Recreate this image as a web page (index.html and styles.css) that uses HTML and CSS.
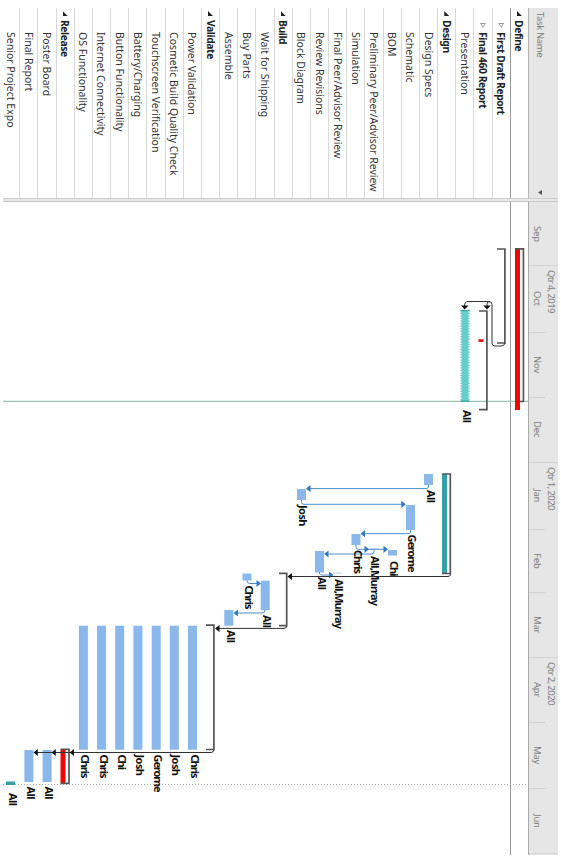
FILE: index.html
```html
<!DOCTYPE html>
<html>
<head>
    <meta charset="utf-8">
    <title>Project Schedule</title>
    <link rel="stylesheet" href="styles.css">
</head>

<body>
<div class="sheet">
    <div class="tasks">
        <div class="tasks-head"><span>Task Name</span><i class="drop"></i></div>
        <div class="row phase first"><i class="open"></i>Define</div>
        <div class="row sub"><i class="closed"></i>First Draft Report</div>
        <div class="row sub"><i class="closed"></i>Final 460 Report</div>
        <div class="row">Presentation</div>
        <div class="row phase"><i class="open"></i>Design</div>
        <div class="row">Design Specs</div>
        <div class="row">Schematic</div>
        <div class="row">BOM</div>
        <div class="row">Preliminary Peer/Advisor Review</div>
        <div class="row">Simulation</div>
        <div class="row">Final Peer/Advisor Review</div>
        <div class="row">Review Revisions</div>
        <div class="row">Block Diagram</div>
        <div class="row phase"><i class="open"></i>Build</div>
        <div class="row">Wait for Shipping</div>
        <div class="row">Buy Parts</div>
        <div class="row">Assemble</div>
        <div class="row phase"><i class="open"></i>Validate</div>
        <div class="row">Power Validation</div>
        <div class="row">Cosmetic Build Quality Check</div>
        <div class="row">Touchscreen Verification</div>
        <div class="row">Battery/Charging</div>
        <div class="row">Button Functionality</div>
        <div class="row">Internet Connectivity</div>
        <div class="row">OS Functionality</div>
        <div class="row phase"><i class="open"></i>Release</div>
        <div class="row">Poster Board</div>
        <div class="row">Final Report</div>
        <div class="row last">Senior Project Expo</div>
    </div>
    <div class="splitter"></div>
    <div class="chart">
        <div class="timeline">
            <div class="quarters">
                <div style="height:64px"></div>
                <div style="height:196.5px">Qtr 4, 2019</div>
                <div style="height:195px">Qtr 1, 2020</div>
                <div style="height:196.5px">Qtr 2, 2020</div>
            </div>
            <div class="months">
                <div style="height:64px">Sep</div>
                <div style="height:66.5px">Oct</div>
                <div style="height:65px">Nov</div>
                <div style="height:65px">Dec</div>
                <div style="height:67px">Jan</div>
                <div style="height:63px">Feb</div>
                <div style="height:65px">Mar</div>
                <div style="height:65px">Apr</div>
                <div style="height:66px">May</div>
                <div style="height:65.5px">Jun</div>
            </div>
        </div>
        <svg class="bars" width="525" height="653" viewBox="3 202 525 653">
            <!-- row line, today, finish -->
            <path class="rowline" d="M510.5 202V855"/>
            <path class="today" d="M3 401.3H528"/>
            <path class="finish" d="M3 784.5H528"/>

            <!-- define -->
            <rect class="late" x="515" y="249" width="5" height="161"/>
            <path class="bracket" d="M515 248.8H523.4V401.5H519"/>
            <path class="bracket" d="M497 249H504.9V343H497"/>
            <path class="bracket" d="M479 311H486.9V409.7H479"/>
            <rect class="late" x="478.5" y="339.3" width="5" height="2.6"/>
            <path class="link" d="M505 343Q504.500 346 501 346H495Q492 346 492 343V304.500Q492 301.500 489 301.500H468Q464.500 301.500 464.500 306M487 306V304Q487 301.500 490 301.500"/>
            <path class="tip" d="M461 305.500H468.500L464.700 309.500ZM483.300 305.500H490.800L487 309.500Z"/>
            <rect class="split" x="461.5" y="310" width="7" height="91.500"/>
            <path class="splitedge" d="M461 310V401.500M469 310V401.500"/>
            <path class="splitend" d="M460.500 310.700H469.500M460.500 401.200H469.500"/>

            <!-- design -->
            <rect class="done" x="442" y="474" width="5" height="100"/>
            <path class="bracket" d="M442 474H450.300V573.500H442"/>
            <rect class="bar" x="424" y="474" width="9" height="11"/>
            <rect class="bar" x="297" y="489" width="9" height="11"/>
            <rect class="bar" x="406" y="505" width="9" height="25"/>
            <rect class="bar" x="351.500" y="534" width="9" height="11"/>
            <rect class="bar" x="388" y="550" width="9" height="5.500"/>
            <rect class="bar" x="315" y="551" width="9" height="21.500"/>
            <rect class="faint" x="370" y="548.500" width="9" height="1"/>
            <rect class="faint" x="333" y="572.500" width="9" height="1"/>
            <path class="blue" d="M428.500 485V487Q428.500 488.600 426 488.600H310"/>
            <path class="blue" d="M301.500 500V502.500Q301.500 504.300 304 504.300H402"/>
            <path class="blue" d="M410.500 530V532Q410.500 533.700 408 533.700H364"/>
            <path class="blue" d="M356 545V547.500Q356 549.300 359 549.300H384"/>
            <path class="blue" d="M374 550V552Q374 554 371 554H328"/>
            <path class="blue" d="M319.500 572V573.500Q320 575 322 575H330"/>
            <path class="bluetip" d="M306 488.600L310.500 485V492.200ZM405.800 504.300L401.300 500.700V507.900ZM360.500 533.700L365 530.100V537.300ZM369 549.300L364.500 545.700V552.900ZM388 549.300L383.500 545.700V552.900ZM324 554L328.500 550.400V557.600ZM333.500 575L329 571.400V578.600Z"/>
            <path class="link" d="M450.500 574Q450.500 576.500 448 576.500H291"/>
            <path class="tip" d="M287.500 576.500L292 573V580Z"/>

            <!-- build -->
            <path class="bracket" d="M279 573.300H286.700V625.700H279"/>
            <rect class="bar" x="242.500" y="573.500" width="9" height="7"/>
            <rect class="bar" x="260.700" y="580.700" width="9" height="29.500"/>
            <rect class="bar" x="224.300" y="610" width="9" height="15.700"/>
            <path class="blue" d="M247 580.500Q247 583.500 250 583.500H257"/>
            <path class="blue" d="M265 610Q265 613 262 613H237"/>
            <path class="bluetip" d="M261 583.500L256.500 579.900V587.100ZM233.500 613L238 609.400V616.600Z"/>
            <path class="link" d="M286.700 626Q286.700 628.400 284 628.400H219"/>
            <path class="tip" d="M215 628.400L219.500 624.900V631.900Z"/>

            <!-- validate -->
            <path class="bracket" d="M206 625.200H213.900V749.500H206"/>
            <rect class="bar" x="188" y="625.700" width="9" height="124"/>
            <rect class="bar" x="169.800" y="625.700" width="9" height="124"/>
            <rect class="bar" x="151.700" y="625.700" width="9" height="124"/>
            <rect class="bar" x="133.400" y="625.700" width="9" height="124"/>
            <rect class="bar" x="115.200" y="625.700" width="9" height="124"/>
            <rect class="bar" x="97" y="625.700" width="9" height="124"/>
            <rect class="bar" x="78.900" y="625.700" width="9" height="124"/>

            <!-- release -->
            <rect class="late" x="60.500" y="750" width="5" height="33"/>
            <path class="bracket" d="M60.500 749.300H69V783.300H60.500"/>
            <rect class="bar" x="42.600" y="750" width="9" height="32"/>
            <rect class="bar" x="24.400" y="750" width="9" height="32"/>
            <rect class="done" x="6" y="781.500" width="9" height="3.500"/>
            <path class="link" d="M213.900 749.500Q213.900 752.500 211 752.500H36"/>
            <path class="tip" d="M69.700 752.500L74 749V756ZM51.500 752.500L55.800 749V756ZM33.500 752.500L37.800 749V756Z"/>

            <g class="names">
                <text transform="translate(462.700 410) rotate(90)" textLength="13">All</text>
                <text transform="translate(426.500 490) rotate(90)" textLength="13">All</text>
                <text transform="translate(299.200 505) rotate(90)" textLength="21.500">Josh</text>
                <text transform="translate(408.400 534.500) rotate(90)" textLength="38">Gerome</text>
                <text transform="translate(353.800 550) rotate(90)" textLength="24">Chris</text>
                <text transform="translate(371.300 556) rotate(90)" textLength="50">All,Murray</text>
                <text transform="translate(390.300 561) rotate(90)" textLength="15.500">Chi</text>
                <text transform="translate(317.500 577) rotate(90)" textLength="13">All</text>
                <text transform="translate(335.300 579) rotate(90)" textLength="50">All,Murray</text>
                <text transform="translate(244.800 585.500) rotate(90)" textLength="24">Chris</text>
                <text transform="translate(263.100 615) rotate(90)" textLength="13">All</text>
                <text transform="translate(226.800 630) rotate(90)" textLength="13">All</text>
                <text transform="translate(190.500 754.500) rotate(90)" textLength="24">Chris</text>
                <text transform="translate(172.300 754.500) rotate(90)" textLength="21.500">Josh</text>
                <text transform="translate(154.200 754.500) rotate(90)" textLength="38">Gerome</text>
                <text transform="translate(135.900 754.500) rotate(90)" textLength="21.500">Josh</text>
                <text transform="translate(117.700 754.500) rotate(90)" textLength="15.500">Chi</text>
                <text transform="translate(99.500 754.500) rotate(90)" textLength="24">Chris</text>
                <text transform="translate(81.400 754.500) rotate(90)" textLength="24">Chris</text>
                <text transform="translate(45.100 786.500) rotate(90)" textLength="13">All</text>
                <text transform="translate(26.800 786.500) rotate(90)" textLength="13">All</text>
                <text transform="translate(8.500 793) rotate(90)" textLength="13">All</text>
            </g>
        </svg>
    </div>
</div>
</body>
</html>
```
FILE: styles.css
```css
html,
body {
    margin: 0;
    padding: 0;
    background-color: #fff;
}

body {
    font-family: "Noto Sans", "Open Sans", sans-serif;
    font-size: 10.5px;
    color: #333;
}

/* the whole schedule reads top to bottom, rows run right to left */
.sheet {
    display: flex;
    flex-direction: column;
    width: 555px;
    height: 847px;
    margin: 8px 3px 4px;
    overflow: hidden;
}

.tasks {
    writing-mode: vertical-rl;
    height: 190px;
    width: 555px;
    overflow: hidden;
}

.tasks-head {
    display: flex;
    justify-content: space-between;
    align-items: center;
    box-sizing: border-box;
    width: 30px;
    height: 190px;
    padding: 4px 7px 3px 0;
    background: #e6e6e6;
    border-left: 1px solid #b4b4b4;
    color: #808080;
    font-size: 9.5px;
    letter-spacing: -0.4px;
}

.row {
    display: flex;
    align-items: center;
    box-sizing: border-box;
    width: 18.18px;
    height: 190px;
    padding-top: 24px;
    border-left: 1px solid #d9d9d9;
    white-space: nowrap;
}

.first {
    border-left-color: #999;
}

.last {
    width: 16.5px;
    border-left: none;
}

.phase,
.sub {
    font-weight: bold;
    font-size: 10.3px;
    letter-spacing: -0.4px;
    color: #222;
}

.phase {
    padding-top: 3px;
}

.sub {
    padding-top: 15px;
}

.open {
    width: 5px;
    height: 5px;
    margin-bottom: 4px;
    background: #222;
    clip-path: polygon(0 0, 0 100%, 100% 100%);
}

.closed {
    box-sizing: border-box;
    width: 6px;
    height: 5px;
    margin-bottom: 4px;
    background: #999;
    clip-path: polygon(0 0, 100% 0, 50% 100%, 0 0, 25% 18%, 50% 68%, 75% 18%, 25% 18%);
}

.drop {
    width: 4px;
    height: 5px;
    background: #555;
    clip-path: polygon(100% 0, 100% 100%, 0 50%);
}

.splitter {
    box-sizing: border-box;
    flex: none;
    height: 4px;
    background: #e8e8e8;
    border-top: 1px solid #ccc;
    border-bottom: 1px solid #c6c6c6;
}

.chart {
    display: flex;
    flex-direction: row-reverse;
    height: 653px;
}

.timeline {
    display: flex;
    flex-direction: row-reverse;
    box-sizing: border-box;
    width: 30px;
    background: #e6e6e6;
    border-left: 1px solid #aaa;
    color: #808080;
    font-size: 9.5px;
    letter-spacing: -0.6px;
}

.quarters,
.months {
    writing-mode: vertical-rl;
    display: flex;
}

.quarters > div,
.months > div {
    box-sizing: border-box;
    flex: none;
    border-bottom: 1px solid #d2d2d2;
}

.quarters > div {
    width: 13px;
    line-height: 13px;
    padding-top: 4px;
}

.months > div {
    width: 16px;
    line-height: 16px;
    text-align: center;
    letter-spacing: -0.2px;
}

.bars {
    display: block;
    flex: none;
}

.bars path {
    fill: none;
}

.bar { fill: #8ab8ea; }
.late { fill: #f00505; }
.done { fill: #35a0a5; }
.split { fill: #66cccc; }
.faint { fill: #a9cbe8; }

.bars .tip { fill: #111; }
.bars .bluetip { fill: #2f78c4; }

.rowline { stroke: #999; }
.today { stroke: #9cc4b0; stroke-width: 1.3; }
.finish { stroke: #aaa; stroke-dasharray: 1 2; }
.bracket { stroke: #555; stroke-width: 1.7; }
.link { stroke: #333; stroke-width: 1; }
.blue { stroke: #4a90cf; stroke-width: 1; }
.splitedge { stroke: #66c4c6; stroke-dasharray: 1.3 1.3; stroke-width: 1.2; }
.splitend { stroke: #3aa3a8; stroke-width: 1.3; }

.names {
    font-size: 11px;
    font-weight: bold;
    fill: #111;
}
```
